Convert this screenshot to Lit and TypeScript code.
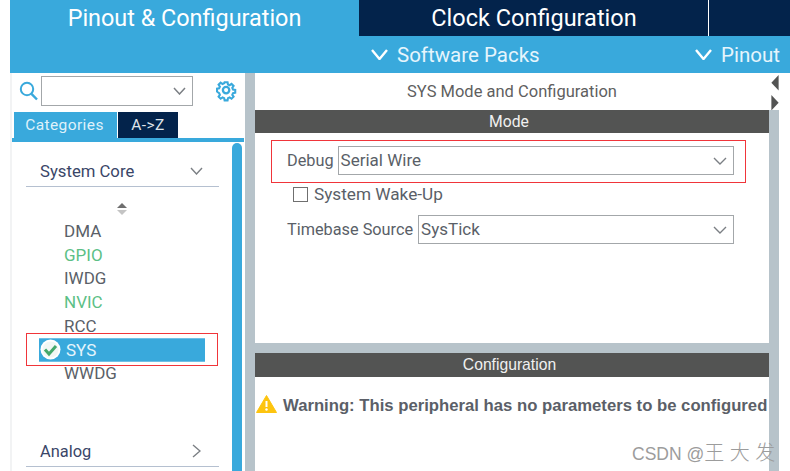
import { LitElement, html, css, svg } from "lit";
import { customElement } from "lit/decorators.js";

const chevron = (w: number, h: number, color: string, sw: number) => html`<svg width=${w} height=${h} viewBox="0 0 ${w} ${h}"><path d="M1 1 L${w / 2} ${h - 1} L${w - 1} 1" fill="none" stroke=${color} stroke-width=${sw}/></svg>`;

@customElement("app-root")
export class AppRoot extends LitElement {
  static styles = css`
    :host { display: block; width: 790px; height: 471px; overflow: hidden; background: #fff; position: relative; font-family: Roboto, "Liberation Sans", sans-serif; color: #5a5f68; }
    * { box-sizing: border-box; }
    .frame { margin-left: 10px; display: flex; flex-direction: column; height: 471px; }
    .tabs { display: flex; height: 36px; background: #03234b; color: #fff; font-size: 23.4px; flex: none; }
    .tab { display: flex; align-items: center; justify-content: center; }
    .tab.pin { width: 349px; background: #39a9dc; }
    .tab.clock { width: 349px; margin-left: 1px; border-right: 1px solid #fff; font-size: 23.5px; }
    .sub { display: flex; height: 37px; background: #39a9dc; color: #e6f5fc; font-size: 20.5px; align-items: center; flex: none; padding-right: 10px; }
    .sub .sp { margin-left: 361px; display: flex; align-items: center; gap: 9px; }
    .sub .pn { margin-left: auto; display: flex; align-items: center; gap: 9px; }
    .body { display: flex; flex: 1; min-height: 0; }
    .left { width: 235px; flex: none; border-left: 2px solid #f2f3f4; display: flex; flex-direction: column; position: relative; }
    .search { display: flex; align-items: center; height: 39px; padding: 3px 0 7px 7px; }
    .combo { width: 152px; height: 30px; margin-left: 3px; border: 1px solid #a3a7aa; display: flex; align-items: center; justify-content: flex-end; padding-right: 6px; }
    .gear { margin-left: 23px; display: flex; }
    .ltabs { display: flex; height: 26px; padding-left: 2px; font-size: 15.5px; letter-spacing: .4px; color: #dff1fa; flex: none; }
    .ltab { display: flex; align-items: center; justify-content: center; background: #39a9dc; width: 103px; padding-right: 2px; }
    .ltab.dark { background: #03234b; width: 60px; margin-left: 1px; color: #dfe4ea; padding-right: 0; }
    .rule { height: 4px; background: #39a9dc; margin-right: 1px; flex: none; }
    .list { flex: 1; position: relative; display: flex; min-height: 0; }
    .content { width: 193px; flex: none; margin-left: 14px; display: flex; flex-direction: column; }
    .cat { display: flex; align-items: center; justify-content: space-between; height: 45px; padding: 14px 16px 0 14px; border-bottom: 1px solid #b5c0d0; font-size: 16.7px; color: #3a4668; flex: none; }
    .sort { display: flex; justify-content: center; margin: 15px 0 0 0; height: 12px; padding-right: 1px; }
    .items { margin-top: 5px; font-size: 17px; }
    .item { height: 23.75px; display: flex; align-items: center; padding-left: 38px; color: #5a5f68; }
    .item.on { color: #5cbf86; }
    .item.sel { background: #39a9dc; color: #e6f5fc; margin: 0 14px 0 13px; padding-left: 1px; gap: 5px; border: 1px solid #6fc0e6; border-width: 1px 0 1px; }
    .item.sel svg { flex: none; }
    .analog { margin-top: 51px; height: 31px; padding: 0 18px 0 14px; font-size: 16.4px; }
    .bar { width: 10px; margin-left: 13px; background: #39a9dc; border-radius: 5px 5px 0 0; margin-top: 1px; }
    .divider { width: 10px; flex: none; background: #b7c3ca; }
    .right { width: 514px; flex: none; display: flex; flex-direction: column; }
    .title { height: 37px; display: flex; align-items: center; justify-content: center; font-size: 16.5px; color: #5f5f5f; flex: none; }
    .head { height: 23px; background: #535453; color: #f0f0f0; display: flex; align-items: center; justify-content: center; font-size: 15.7px; flex: none; padding-right: 6px; }
    .mode { height: 210px; display: flex; flex-direction: column; padding: 13px 35px 0 32px; font-size: 16.3px; flex: none; }
    .row { display: flex; align-items: center; gap: 5px; }
    .row.dbg { gap: 4px; }
    .sel-box { flex: 1; height: 29px; border: 1px solid #a3a7aa; display: flex; align-items: center; justify-content: space-between; padding: 0 6px 2px 2px; font-size: 17px; }
    .sel-box svg { margin-top: 2px; }
    .check { display: flex; align-items: center; gap: 6px; margin: 11px 0 13px 6px; height: 16px; font-size: 17.2px; }
    .box { width: 15px; height: 15px; border: 1px solid #6f6f6f; }
    .gap { height: 10px; background: #b7c3ca; flex: none; }
    .warn { flex: none; padding: 18px 0 0 1px; display: flex; align-items: center; gap: 6px; font: bold 16.7px "Liberation Sans", sans-serif; color: #5b5f68; white-space: nowrap; }
    .warn svg { margin-bottom: 3px; flex: none; }
    .cfg { font-family: "Liberation Sans", sans-serif; font-size: 15.7px; height: 24px; padding-right: 5px; }
    .rail { width: 10px; flex: none; display: flex; flex-direction: column; }
    .arrows { height: 37px; flex: none; padding-left: 2px; display: flex; flex-direction: column; gap: 4px; padding-top: 2px; }
    .railbar { flex: 1; background: #b7c3ca; }
    .mark { position: absolute; left: 632px; top: 437px; color: #9c9c9c; font: 17.5px "Liberation Sans", "Noto Sans CJK SC", sans-serif; white-space: nowrap; }
    .mark span { font-size: 20px; font-weight: 300; }
    .red { position: absolute; border: 1px solid #f0353a; pointer-events: none; }
    .red.a { left: 271px; top: 140px; width: 475px; height: 43px; }
    .red.b { left: 26px; top: 333px; width: 192px; height: 33px; }
  `;

  render() {
    const gear = svg`<g fill="none" stroke="#39a9dc" stroke-width="2.5"><circle cx="11" cy="11" r="3.5"/><path d="M9.2 1.5h3.6l.5 2.7 2 .9 2.3-1.6 2.5 2.5-1.6 2.3.9 2 2.7.5v3.4l-2.7.5-.9 2 1.6 2.3-2.5 2.5-2.3-1.6-2 .9-.5 2.7H9.2l-.5-2.7-2-.9-2.3 1.6-2.5-2.5 1.6-2.3-.9-2L0 12.7V9.3l2.6-.5.9-2-1.6-2.3 2.5-2.5 2.3 1.6 2-.9z" transform="translate(1.1 1.1) scale(.9)"/></g>`;
    return html`
      <div class="frame">
        <div class="tabs">
          <div class="tab pin">Pinout &amp; Configuration</div>
          <div class="tab clock">Clock Configuration</div>
        </div>
        <div class="sub">
          <div class="sp">${chevron(17, 11, "#fff", 2.4)}<span>Software Packs</span></div>
          <div class="pn">${chevron(17, 11, "#fff", 2.4)}<span>Pinout</span></div>
        </div>
        <div class="body">
          <div class="left">
            <div class="search">
              <svg width="19" height="20" viewBox="0 0 19 20"><circle cx="8" cy="8" r="6.2" fill="none" stroke="#39a9dc" stroke-width="2"/><path d="M12.5 12.8 L18 18.5" stroke="#39a9dc" stroke-width="2.4"/></svg>
              <div class="combo">${chevron(13, 8, "#7b7f84", 1.5)}</div>
              <div class="gear"><svg width="22" height="22" viewBox="0 0 24 24">${gear}</svg></div>
            </div>
            <div class="ltabs">
              <div class="ltab">Categories</div>
              <div class="ltab dark">A-&gt;Z</div>
            </div>
            <div class="rule"></div>
            <div class="list">
              <div class="content">
                <div class="cat"><span>System Core</span>${chevron(13, 8, "#7b7f84", 1.4)}</div>
                <div class="sort"><svg width="10" height="14" viewBox="0 0 10 14"><path d="M5 1 L10 6 H0z" fill="#6f6f6f"/><path d="M5 13 L10 8 H0z" fill="#c4c4c4"/></svg></div>
                <div class="items">
                  <div class="item">DMA</div>
                  <div class="item on">GPIO</div>
                  <div class="item">IWDG</div>
                  <div class="item on">NVIC</div>
                  <div class="item">RCC</div>
                  <div class="item sel">
                    <svg width="21" height="21" viewBox="0 0 21 21"><circle cx="10.5" cy="10.5" r="10" fill="#fff"/><circle cx="10.5" cy="10.5" r="8" fill="#f2f7f4"/><path d="M5 10.5 L9 15 L16 7" fill="none" stroke="#45a86b" stroke-width="3"/></svg>
                    <span>SYS</span>
                  </div>
                  <div class="item">WWDG</div>
                </div>
                <div class="cat analog"><span>Analog</span><svg width="9" height="14" viewBox="0 0 9 14"><path d="M1 1 L8 7 L1 13" fill="none" stroke="#7b7f84" stroke-width="1.4"/></svg></div>
              </div>
              <div class="bar"></div>
            </div>
          </div>
          <div class="divider"></div>
          <div class="right">
            <div class="title">SYS Mode and Configuration</div>
            <div class="head">Mode</div>
            <div class="mode">
              <div class="row dbg"><span>Debug</span><div class="sel-box"><span>Serial Wire</span>${chevron(14, 8, "#7b7f84", 1.4)}</div></div>
              <div class="check"><div class="box"></div><span>System Wake-Up</span></div>
              <div class="row"><span>Timebase Source</span><div class="sel-box"><span>SysTick</span>${chevron(14, 8, "#7b7f84", 1.4)}</div></div>
            </div>
            <div class="gap"></div>
            <div class="head cfg">Configuration</div>
            <div class="warn">
              <svg width="21" height="18" viewBox="0 0 21 18"><path d="M10.5 0.5 L20.5 17.5 H0.5z" fill="#fdc40f" stroke="#fdc40f" stroke-linejoin="round"/><path d="M10.5 6 V12" stroke="#fff" stroke-width="2"/><circle cx="10.5" cy="14.5" r="1.2" fill="#fff"/></svg>
              <span>Warning: This peripheral has no parameters to be configured</span>
            </div>
          </div>
          <div class="rail">
            <div class="arrows">
              <svg width="8" height="17" viewBox="0 0 8 17"><path d="M8 0 V17 L0 8.5z" fill="#535453"/></svg>
              <svg width="8" height="17" viewBox="0 0 8 17"><path d="M0 0 V17 L8 8.5z" fill="#535453"/></svg>
            </div>
            <div class="railbar"></div>
          </div>
        </div>
      </div>
      <div class="mark">CSDN @<span>王 大 发</span></div>
      <div class="red a"></div>
      <div class="red b"></div>
    `;
  }
}
